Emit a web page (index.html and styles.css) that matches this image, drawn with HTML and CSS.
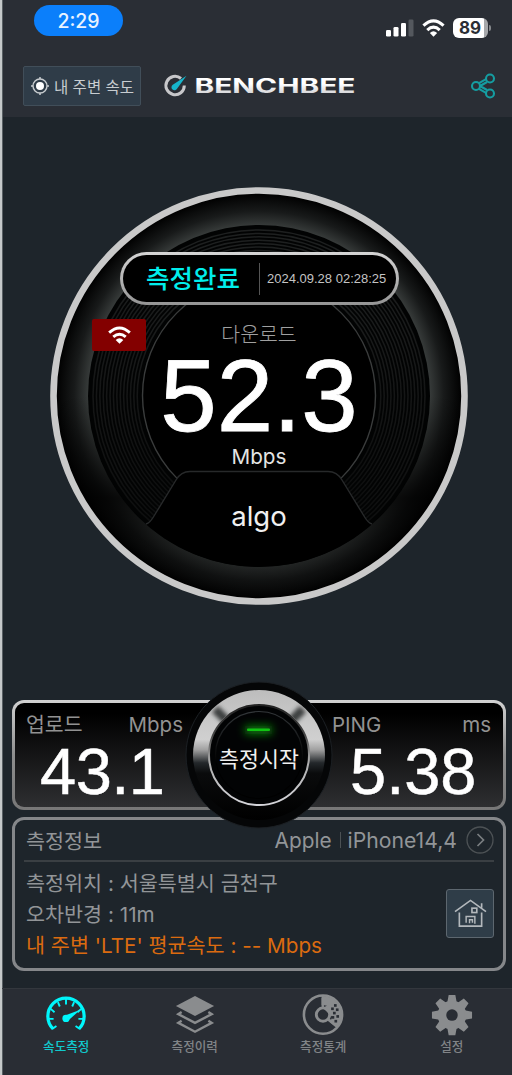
FILE: index.html
```html
<!DOCTYPE html>
<html lang="ko">
<head>
<meta charset="utf-8">
<title>BENCHBEE</title>
<link rel="stylesheet" href="styles.css">
</head>
<body>
<div class="app">
  <header class="top">
    <div class="status">
      <span class="clock">2:29</span>
      <div class="status-icons">
        <svg class="signal" viewBox="0 0 28 18"><g fill="#fff"><rect x="0" y="11" width="5" height="6.500" rx="1.300"/><rect x="7.500" y="8" width="5" height="9.500" rx="1.300"/><rect x="15" y="4" width="5" height="13.500" rx="1.300"/></g><rect x="22.500" y="0.500" width="5" height="17" rx="1.300" fill="#54585e"/></svg>
        <svg class="wifi" viewBox="0 0 24 18"><g fill="none" stroke="#fff" stroke-width="3.200"><path d="M1.500 6.500Q12-3.500 22.500 6.500"/><path d="M5.500 11.300Q12 5.100 18.500 11.300"/></g><path d="M8.200 14.200Q12 10.700 15.800 14.200L12 18Z" fill="#fff"/></svg>
        <span class="battery"><b>89</b></span>
      </div>
    </div>
    <div class="bar">
      <button class="nearby">
        <svg viewBox="0 0 18 18"><circle cx="9" cy="9" r="7" fill="none" stroke="#c8cccf" stroke-width="1.400"/><circle cx="9" cy="9" r="4" fill="#fff"/><path d="M9 0v2M9 16v2M0 9h2M16 9h2" stroke="#c8cccf" stroke-width="1.500"/></svg>
        <span>내 주변 속도</span>
      </button>
      <svg class="logo" viewBox="0 0 194 26">
        <defs><linearGradient id="word" x1="0" y1="0" x2="0" y2="1"><stop offset=".4" stop-color="#fff"/><stop offset="1" stop-color="#c4c4c8"/></linearGradient></defs>
        <path d="M17 5.500A9.200 9.200 0 1 0 20.300 12.500" fill="none" stroke="#c7c7ca" stroke-width="3"/>
        <path d="M22.500 2.800L8.800 11.800A3 3 0 1 0 13.200 15.500Z" fill="#16b5cb"/>
        <text x="30.500" y="20" textLength="161" lengthAdjust="spacingAndGlyphs" fill="url(#word)">BENCHBEE</text>
      </svg>
      <svg class="share" viewBox="0 0 26 26"><g fill="none" stroke="#159da1" stroke-width="2.100"><circle cx="6" cy="13" r="4"/><circle cx="20" cy="5.500" r="4"/><circle cx="20" cy="20.500" r="4"/><path d="M9 10.200l7-4M10 13l7-4M10 13l7 4M9 15.800l7 4"/></g></svg>
    </div>
  </header>

  <main class="main">
    <section class="gauge">
      <svg class="dial" viewBox="0 0 420 420">
        <defs>
          <radialGradient id="rim" gradientUnits="userSpaceOnUse" cx="210" cy="210" r="203"><stop offset=".84" stop-color="#373b3a"/><stop offset=".91" stop-color="#181a1a"/><stop offset="1" stop-color="#000"/></radialGradient>
          <linearGradient id="shade" x1="0" y1="0" x2="0" y2="1"><stop offset=".5" stop-color="#000" stop-opacity="0"/><stop offset=".75" stop-color="#000" stop-opacity=".8"/><stop offset=".87" stop-color="#000" stop-opacity=".45"/><stop offset="1" stop-color="#000" stop-opacity=".25"/></linearGradient>
          <linearGradient id="fade" x1="0" y1="0" x2="0" y2="1"><stop offset="0" stop-color="#1e2020"/><stop offset=".5" stop-color="#151616"/><stop offset="1" stop-color="#0b0c0c"/></linearGradient>
        </defs>
        <circle cx="210" cy="210" r="205.500" fill="url(#rim)"/>
        <circle cx="210" cy="210" r="204" fill="url(#shade)"/>
        <circle cx="210" cy="210" r="205.500" fill="none" stroke="#c9c9c9" stroke-width="6.600"/>
        <circle cx="210" cy="210" r="171" fill="#020303"/>
        <g class="grooves" fill="none" stroke="url(#fade)" stroke-width="1.500">
          <circle cx="210" cy="210" r="166"/><circle cx="210" cy="210" r="162.600"/><circle cx="210" cy="210" r="159.200"/><circle cx="210" cy="210" r="155.800"/><circle cx="210" cy="210" r="152.400"/><circle cx="210" cy="210" r="149"/><circle cx="210" cy="210" r="145.600"/><circle cx="210" cy="210" r="142.200"/><circle cx="210" cy="210" r="138.800"/><circle cx="210" cy="210" r="135.400"/><circle cx="210" cy="210" r="132"/><circle cx="210" cy="210" r="128.600"/><circle cx="210" cy="210" r="125.200"/><circle cx="210" cy="210" r="121.800"/>
        </g>
        <circle cx="210" cy="209.500" r="116.500" fill="#000" stroke="#3a3c3c" stroke-width="1.400"/>
        <path d="M97 338Q101 337 105 330L127 294Q132 285.500 141 285.500H279Q288 285.500 293 294L315 330Q319 337 323 338A171 171 0 0 1 97 338Z" fill="#000"/>
        <path d="M97 338Q101 337 105 330L127 294Q132 285.500 141 285.500H279Q288 285.500 293 294L315 330Q319 337 323 338" fill="none" stroke="#27292a" stroke-width="1.400"/>
      </svg>
      <div class="reading">
        <span class="r-label">다운로드</span>
        <span class="r-value">52.3</span>
        <span class="r-unit">Mbps</span>
        <span class="r-host">algo</span>
      </div>
      <div class="done"><strong>측정완료</strong><i></i><time>2024.09.28 02:28:25</time></div>
      <div class="net"><svg viewBox="0 0 24 18"><g fill="none" stroke="#fff" stroke-width="3"><path d="M1.200 6.500Q12-3.300 22.800 6.500"/><path d="M5.500 11Q12 5.300 18.500 11"/></g><path d="M8 14.100Q12 10.900 16 14.100L12 18Z" fill="#fff"/></svg></div>
    </section>

    <section class="results">
      <div class="cell upload"><div class="cell-head"><span>업로드</span><span>Mbps</span></div><div class="cell-value">43.1</div></div>
      <div class="cell ping"><div class="cell-head"><span>PING</span><span>ms</span></div><div class="cell-value">5.38</div></div>
      <button class="start">
        <svg viewBox="0 0 148 148">
          <defs>
            <linearGradient id="metal" x1="0" y1="0" x2="0" y2="1"><stop offset="0" stop-color="#bdbdbd"/><stop offset=".38" stop-color="#d0d0d0"/><stop offset=".46" stop-color="#a0a0a0"/><stop offset=".56" stop-color="#24282b"/><stop offset=".64" stop-color="#0a0b0c"/><stop offset="1" stop-color="#000"/></linearGradient>
            <linearGradient id="lip" x1="0" y1="0" x2="0" y2="1"><stop offset="0" stop-color="#222"/><stop offset=".3" stop-color="#444"/><stop offset=".55" stop-color="#aaa"/><stop offset="1" stop-color="#d5d5da"/></linearGradient>
            <linearGradient id="arc" x1="0" y1="0" x2="0" y2="1"><stop offset="0" stop-color="#33373a"/><stop offset=".6" stop-color="#000"/></linearGradient>
            <filter id="soft" x="-50%" y="-50%" width="200%" height="200%"><feGaussianBlur stdDeviation="2"/></filter>
            <filter id="glow" x="-100%" y="-400%" width="300%" height="900%"><feGaussianBlur stdDeviation="4"/></filter>
            <clipPath id="band"><path clip-rule="evenodd" d="M8 74a66 65 0 1 1 132 0a66 65 0 1 1-132 0ZM23 74a51 51 0 1 0 102 0a51 51 0 1 0-102 0Z"/></clipPath>
          </defs>
          <circle cx="74" cy="74" r="73" fill="#050607" stroke="#1c2024"/>
          <ellipse cx="74" cy="74" rx="66" ry="65" fill="url(#metal)"/>
          <g clip-path="url(#band)"><path d="M30 28l15 15M118 28l-15 15" stroke="#3d3f40" stroke-width="9" filter="url(#soft)"/></g>
          <circle cx="74" cy="74" r="50" fill="#020304" stroke="url(#lip)" stroke-width="2"/>
          <circle cx="74" cy="74" r="43.500" fill="none" stroke="url(#arc)" stroke-width="1.200"/>
          <rect x="60" y="45" width="27" height="8" fill="#0a8a0a" filter="url(#glow)"/>
          <rect x="62" y="47.500" width="23" height="2.500" rx="1" fill="#10c512"/>
        </svg>
        <span>측정시작</span>
      </button>
    </section>

    <section class="info">
      <div class="info-head"><span>측정정보</span><div class="device"><span class="brand">Apple</span><i></i><span class="model">iPhone14,4</span><svg viewBox="0 0 28 28"><circle cx="14" cy="14" r="13" fill="none" stroke="#4d5255" stroke-width="1.300"/><path d="M11.500 8l6 6-6 6" fill="none" stroke="#7a7e81" stroke-width="1.700"/></svg></div></div>
      <div class="info-body">
        <div class="lines"><p>측정위치 : 서울특별시 금천구</p><p>오차반경 : 11m</p><p class="avg">내 주변 'LTE' 평균속도 : -- Mbps</p></div>
        <button class="home"><svg viewBox="0 0 36 32"><g fill="none" stroke="#b3b8bc" stroke-width="1.700"><path d="M2 14L18 2.500L34 14M6.500 15v14h23v-14M29.500 10v-4.500"/><path d="M13.500 25.500v-6.500h9v7.500M17 26v-3.500h3v3" stroke-width="1.500"/><rect x="19.500" y="10.500" width="5" height="4.500"/></g></svg></button>
      </div>
    </section>
  </main>

  <nav class="tabs">
    <a class="tab active"><svg viewBox="0 0 44 44"><path d="M8.500 34.500A19 19 0 1 1 35.500 34.500" fill="none" stroke="#00f6fb" stroke-width="3.400"/><path d="M7.500 34.500l4.500-3M36.500 34.500l-4.500-3M4 24h5M40 24h-5M6 13.500l4 3.500M38 13.500l-4 3.500M13.500 6.500l2 4.500M30.500 6.500l-2 4.500M22 3v6" stroke="#00f6fb" stroke-width="2"/><circle cx="22" cy="23.500" r="3.800" fill="#00f6fb"/><path d="M21 20.500L37 14.500L24 26Z" fill="#00f6fb"/></svg><span>속도측정</span></a>
    <a class="tab"><svg viewBox="0 0 44 44"><path d="M22 0L42 10.500L22 21L2 10.500Z" fill="#8a8c8e"/><path d="M8 16.800L4.500 19L22 28.200L39.500 19L36 16.800" fill="none" stroke="#8a8c8e" stroke-width="2.500"/><path d="M8 26L4.500 28.200L22 37.400L39.500 28.200L36 26" fill="none" stroke="#8a8c8e" stroke-width="2.500"/></svg><span>측정이력</span></a>
    <a class="tab"><svg viewBox="0 0 44 44"><circle cx="22" cy="19.500" r="20" fill="none" stroke="#8a8c8e" stroke-width="2.700"/><path d="M20.500 19.500V0A20 20 0 0 1 36.500 33.500Z" fill="#8a8c8e"/><circle cx="22" cy="19.500" r="10" fill="#292d34"/><circle cx="22" cy="19.500" r="7" fill="none" stroke="#8a8c8e" stroke-width="3"/><path d="M20.500 2H23V12L20.500 12Z" fill="#8a8c8e"/><path d="M27.500 24.500l8.500 7" stroke="#8a8c8e" stroke-width="2.800"/><path d="M22 12.500L31 7L33 23L29 19.500Z" fill="#8a8c8e"/><g fill="#292d34"><rect x="33.500" y="8.500" width="2.800" height="2.800"/><rect x="30.500" y="12" width="2.800" height="2.800"/><rect x="35.500" y="13" width="2.800" height="2.800"/><rect x="32.500" y="16.500" width="2.800" height="2.800"/><rect x="36" y="20" width="2.800" height="2.800"/><rect x="31" y="21" width="2.800" height="2.800"/><rect x="34" y="25" width="2.800" height="2.800"/></g></svg><span>측정통계</span></a>
    <a class="tab"><svg viewBox="0 0 44 44"><g fill="#8a8c8e"><circle cx="22" cy="20" r="15"/><g id="t"><path d="M18.500-1h7l1.500 8h-10ZM18.500 41h7l1.500-8h-10Z"/></g><use href="#t" transform="rotate(45 22 20)"/><use href="#t" transform="rotate(90 22 20)"/><use href="#t" transform="rotate(135 22 20)"/></g><circle cx="22" cy="20" r="6" fill="#292d34"/></svg><span>설정</span></a>
  </nav>
</div>
</body>
</html>
```

FILE: styles.css
```css
* { box-sizing: border-box; }
body { margin: 0; background: #1e252b; font-family: Inter, "Noto Sans CJK KR", sans-serif; }
button { border: 0; padding: 0; font: inherit; }
svg { display: block; overflow: visible; }
.app { width: 512px; height: 1075px; display: flex; flex-direction: column; overflow: hidden; background: #1e252b; border-left: 2px solid #c5c9ca; box-shadow: inset 1px 0 #596064; }

.top { height: 117px; background: #2a2e35; box-shadow: inset 1px 0 #596064; }
.status { height: 54px; padding: 5px 24px 0 32px; display: flex; justify-content: space-between; align-items: flex-start; }
.clock { width: 89px; height: 31px; border-radius: 16px; background: #0b7ffb; color: #e9f3ff; font-size: 19.5px; line-height: 32px; font-weight: 500; text-align: center; }
.status-icons { display: flex; padding-top: 13px; align-items: flex-start; }
.signal { width: 28px; height: 18px; margin: 1px 8px 0 0; }
.wifi { width: 23px; height: 18px; margin: 1px 8px 0 0; }
.battery { position: relative; width: 35px; height: 20px; border-radius: 6px; background: linear-gradient(90deg, #fff 89%, #a6a8ab 89%); color: #2a2e35; font-size: 17px; line-height: 20px; text-align: center; padding-right: 1px; }
.battery::after { content: ""; position: absolute; right: -3px; top: 7px; width: 2px; height: 6px; border-radius: 0 2px 2px 0; background: #85888c; }
.bar { height: 63px; padding: 12px 16px 0 21px; display: flex; align-items: flex-start; }
.nearby { width: 118px; height: 40px; display: flex; align-items: center; gap: 5px; padding-left: 7px; background: #2f3c48; border: 1px solid #414e59; border-radius: 2px; color: #c8cdd1; font-size: 15.5px; white-space: nowrap; }
.nearby svg { width: 18px; height: 18px; flex: none; }
.logo { width: 194px; height: 26px; margin: 7px 0 0 23px; }
.logo text { font: 700 19.5px Inter, sans-serif; }
.share { width: 26px; height: 26px; margin: 7px 0 0 auto; }

.main { flex: 1; display: flex; flex-direction: column; padding-left: 10px; }
.gauge { position: relative; width: 420px; height: 420px; margin: 69px 0 0 37px; display: grid; }
.dial, .reading { grid-area: 1 / 1; }
.dial { width: 420px; height: 420px; }
.reading { display: flex; flex-direction: column; align-items: center; padding-top: 134px; white-space: nowrap; }
.r-label { height: 30px; line-height: 30px; font-size: 20.5px; font-weight: 300; color: #a0a0a0; }
.r-value { height: 92px; line-height: 92px; font-family: "Liberation Sans", sans-serif; font-size: 101.5px; color: #fff; -webkit-text-stroke: .8px #fff; }
.r-unit { height: 26px; margin-top: 2px; line-height: 26px; font-size: 20.7px; color: #e4e4e4; }
.r-host { height: 36px; margin-top: 28px; line-height: 36px; font-size: 27.5px; color: #f0f0f0; }
.done { position: absolute; left: 71px; top: 66px; width: 279px; height: 53px; border: 3.500px solid transparent; border-radius: 27px; background: linear-gradient(#000, #000) padding-box, linear-gradient(#d5d5d5, #949494) border-box; display: flex; align-items: center; padding-left: 23px; white-space: nowrap; }
.done strong { width: 94px; font-size: 25.5px; font-weight: 500; line-height: 40px; color: #00eeec; }
.done i { width: 1px; height: 32px; margin: 0 7px 0 19px; background: #555; }
.done time { font: 13px "Liberation Sans", sans-serif; color: #c4c4c4; }
.net { position: absolute; left: 43px; top: 133px; width: 54px; height: 32px; border-radius: 2px; background: #830000; display: grid; place-items: center; }
.net svg { width: 23px; height: 18px; }

.results { position: relative; width: 494px; height: 110px; margin-top: 94px; border: 3.500px solid transparent; border-radius: 12px; background: linear-gradient(#000 10%, #2e2f31) padding-box, linear-gradient(#d2d2d2, #8e8e8e 50%, #777) border-box; display: flex; justify-content: space-between; }
.cell-head { display: flex; justify-content: space-between; height: 34px; padding-top: 6px; line-height: 31px; font-size: 20.5px; color: #929292; }
.upload { width: 168px; padding-left: 11px; }
.ping { width: 171px; padding-right: 12px; }
.cell-value { font: 65px/69px "Liberation Sans", sans-serif; color: #fff; -webkit-text-stroke: .5px #fff; }
.upload .cell-value { padding-left: 14px; letter-spacing: -.5px; }
.ping .cell-value { padding-left: 18px; }
.start { position: absolute; left: 170px; top: -22px; width: 148px; height: 148px; background: none; display: grid; z-index: 2; }
.start svg, .start span { grid-area: 1 / 1; }
.start span { align-self: center; padding-top: 5px; font-size: 21.700px; color: #f0f0f0; text-align: center; position: relative; }

.info { width: 494px; height: 154px; margin-top: 7px; padding: 0 9px 0 9px; border: 3.500px solid #85878a; border-radius: 12px; color: #929598; font-size: 20.7px; white-space: nowrap; }
.info-head { height: 42px; padding-left: 2px; display: flex; justify-content: space-between; align-items: center; border-bottom: 2px solid #3a3f43; }
.device { display: flex; align-items: center; }
.brand { font-size: 20.8px; }
.model { font-size: 21.2px; }
.device i { width: 1px; height: 16px; margin: 0 7px 0 8px; background: #4c5154; }
.device svg { width: 28px; height: 28px; margin-left: 9px; }
.info-body { display: flex; justify-content: space-between; padding: 6px 0 0 2px; }
.lines p { margin: 0; height: 31px; line-height: 31px; }
.lines .avg { color: #db6b10; }
.home { width: 48px; height: 49px; margin-top: 21px; display: grid; place-items: center; background: #2f3d48; border: 1.500px solid #5d676f; border-radius: 3px; }
.home svg { width: 35px; height: 31px; }

.tabs { height: 87px; padding: 7px 0 0 0; background: #292d34; border-top: 1px solid #33373d; box-shadow: inset 1px 0 #596064; display: grid; grid-template-columns: 128.500px 128.500px 128.500px 128.500px; }
.tab { display: flex; flex-direction: column; align-items: center; color: #818487; font-size: 12.6px; line-height: 18px; font-weight: 500; }
.tab svg { width: 44px; height: 42px; }
.tab.active { color: #11c9cd; }
```
